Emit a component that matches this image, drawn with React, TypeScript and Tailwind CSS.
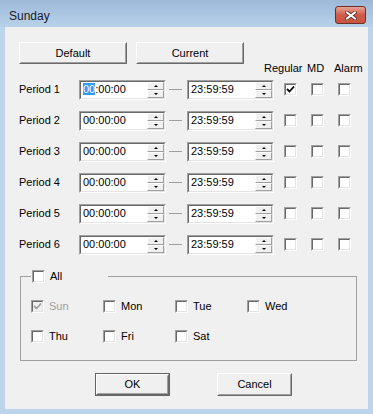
import React from 'react';

function Check({ checked = false, disabled = false }: { checked?: boolean; disabled?: boolean }) {
  return (
    <div className="w-[13px] h-[13px] shrink-0 border border-t-[#a0a0a0] border-l-[#a0a0a0] border-b-white border-r-white">
      <div
        className={`w-full h-full border border-t-[#696969] border-l-[#696969] border-b-[#e3e3e3] border-r-[#e3e3e3] flex items-center justify-center ${
          disabled ? 'bg-[#f0f0f0]' : 'bg-white'
        }`}
      >
        {checked && (
          <svg width="9" height="9" viewBox="0 0 9 9">
            <polyline points="1,4 3.5,6.5 8,1.5" fill="none" stroke={disabled ? '#a0a0a0' : '#000'} strokeWidth="1.8" />
          </svg>
        )}
      </div>
    </div>
  );
}

function Spin() {
  return (
    <div className="w-[17px] h-full flex flex-col">
      <div className="flex-1 bg-[#f0f0f0] border border-t-white border-l-white border-b-[#a0a0a0] border-r-[#a0a0a0] flex items-center justify-center">
        <div className="w-0 h-0 border-x-[2px] border-x-transparent border-b-[2px] border-b-black" />
      </div>
      <div className="flex-1 bg-[#f0f0f0] border border-t-white border-l-white border-b-[#a0a0a0] border-r-[#a0a0a0] flex items-center justify-center">
        <div className="w-0 h-0 border-x-[2px] border-x-transparent border-t-[2px] border-t-black" />
      </div>
    </div>
  );
}

function TimeInput({ value, highlight = false }: { value: string; highlight?: boolean }) {
  return (
    <div className="w-[87px] h-[20px] shrink-0 border border-t-[#a0a0a0] border-l-[#a0a0a0] border-b-white border-r-white">
      <div className="w-full h-full bg-white border border-t-[#696969] border-l-[#696969] border-b-[#e3e3e3] border-r-[#e3e3e3] flex items-center justify-between">
        <span className="pl-[2px] leading-[13px]">
          {highlight ? (
            <>
              <span className="bg-[#3399ff] text-white">{value.slice(0, 2)}</span>
              {value.slice(2)}
            </>
          ) : (
            value
          )}
        </span>
        <Spin />
      </div>
    </div>
  );
}

function WinButton({ label, width, isDefault = false }: { label: string; width: string; isDefault?: boolean }) {
  return (
    <div className={`${width} h-full ${isDefault ? 'border border-[#646464]' : ''}`}>
      <div className="w-full h-full border border-t-white border-l-white border-b-[#696969] border-r-[#696969]">
        <div className="w-full h-full bg-[#f0f0f0] border border-t-[#f0f0f0] border-l-[#f0f0f0] border-b-[#a0a0a0] border-r-[#a0a0a0] flex items-center justify-center">
          {label}
        </div>
      </div>
    </div>
  );
}

const periods = [1, 2, 3, 4, 5, 6];
const days = ['Sun', 'Mon', 'Tue', 'Wed', 'Thu', 'Fri', 'Sat'];

export default function App() {
  return (
    <div className="w-[373px] h-[414px] bg-[#bcd4ec] flex flex-col font-['Liberation_Sans',Arial,sans-serif] text-[11px] text-black">
      {/* title bar */}
      <div className="h-[27px] shrink-0 bg-linear-to-b from-[#9db9d8] to-[#b9d1ea] flex items-start justify-between pl-[9px] pr-[7px]">
        <span className="mt-[8px] text-[12px] leading-[16px] text-[#1b1b2a]">Sunday</span>
        <div className="mt-[6px] w-[31px] h-[18px] rounded-[3px] border border-[#6e2e2a] bg-linear-to-b from-[#e7a395] via-[#cf5c47] to-[#c9553f] flex items-center justify-center">
          <svg width="12" height="9" viewBox="0 0 12 9">
            <path d="M2 1.5 L10 7.5 M10 1.5 L2 7.5" stroke="#5a2a26" strokeWidth="3.6" strokeLinecap="square" />
            <path d="M2 1.5 L10 7.5 M10 1.5 L2 7.5" stroke="#fff" strokeWidth="2" strokeLinecap="square" />
          </svg>
        </div>
      </div>

      {/* client area */}
      <div className="mx-[5px] h-[382px] bg-[#f0f0f0] pl-[14px] pt-[15px]">
        <div className="flex gap-[9px] h-[22px]">
          <WinButton label="Default" width="w-[108px]" />
          <WinButton label="Current" width="w-[108px]" />
        </div>

        <div className="flex h-[12px] -mt-[2px] pl-[245px] leading-[12px]">
          <span className="w-[43px]">Regular</span>
          <span className="w-[27px]">MD</span>
          <span>Alarm</span>
        </div>

        {periods.map((p) => (
          <div key={p} className="flex items-center h-[31px]">
            <span className="w-[60px]">Period {p}</span>
            <TimeInput value="00:00:00" highlight={p === 1} />
            <div className="ml-[3px] w-[13px] h-px bg-[#a0a0a0]" />
            <div className="ml-[5px]">
              <TimeInput value="23:59:59" />
            </div>
            <div className="ml-[10px]">
              <Check checked={p === 1} />
            </div>
            <div className="ml-[14px]">
              <Check />
            </div>
            <div className="ml-[14px]">
              <Check />
            </div>
          </div>
        ))}

        {/* day group */}
        <div className="relative mt-[16px] ml-[1px] w-[337px] h-[85px] border border-[#a0a0a0]">
          <div className="absolute left-[10px] -top-[7px] w-[77px] h-[13px] bg-[#f0f0f0] flex items-center">
            <div className="ml-[1px]">
              <Check />
            </div>
            <span className="ml-[5px]">All</span>
          </div>
          <div className="grid grid-cols-[72px_72px_72px_72px] gap-y-[14px] pl-[10px] pt-[21px]">
            {days.map((d) => (
              <div key={d} className="flex items-center h-[16px]">
                <Check checked={d === 'Sun'} disabled={d === 'Sun'} />
                <span className={`ml-[5px] ${d === 'Sun' ? 'text-[#a0a0a0]' : ''}`}>{d}</span>
              </div>
            ))}
          </div>
        </div>

        <div className="flex h-[23px] mt-[12px] ml-[76px] gap-[47px]">
          <WinButton label="OK" width="w-[75px]" isDefault />
          <WinButton label="Cancel" width="w-[75px]" />
        </div>
      </div>
    </div>
  );
}
